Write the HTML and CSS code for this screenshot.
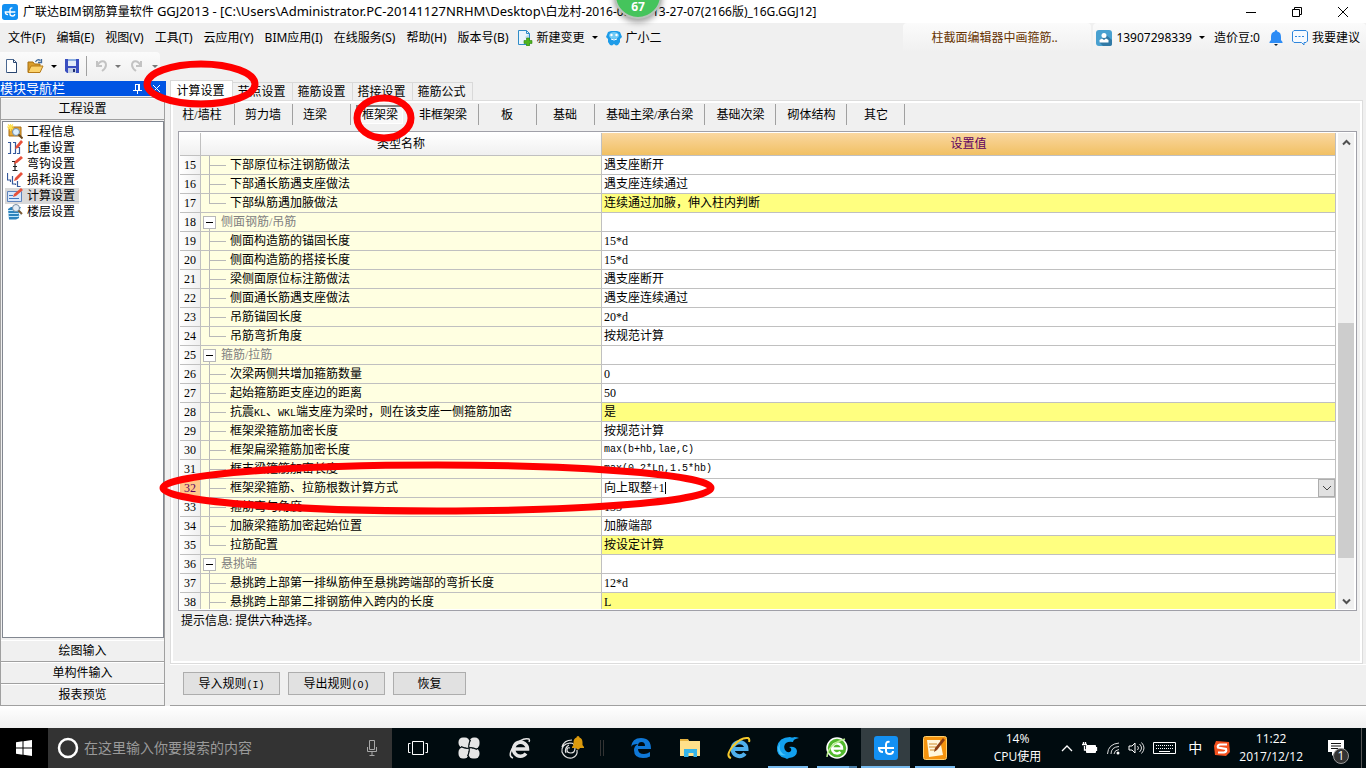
FILE: index.html
```html
<!DOCTYPE html>
<html lang="zh-CN">
<head>
<meta charset="utf-8">
<title>广联达BIM钢筋算量软件 GGJ2013</title>
<link rel="stylesheet" href="styles.css">
</head>
<body>
<header class="titlebar">
  <svg class="i16" viewBox="0 0 24 24"><rect width="24" height="24" rx="4" fill="#1390f2"/><path d="M15.500 6q-3.500-1-3.500 3v6q0 3 4 3 3 0 3-3M4 12h16M5 12q0 4 4 4" fill="none" stroke="#fff" stroke-width="2"/></svg>
  <h1>广联达BIM钢筋算量软件 <span class="path">GGJ2013 - [C:\Users\Administrator.PC-20141127NRHM\Desktop\</span>白龙村-2016-08-09-13-27-07(2166版)_16G.GGJ12]</h1>
  <div class="winbtns">
    <button aria-label="最小化"><svg width="12" height="12"><path d="M1 6.500h10" stroke="#000"/></svg></button>
    <button aria-label="还原"><svg width="12" height="12"><path d="M1.500 3.500h7v7h-7zM3.500 3V1.500h7v7H9" fill="none" stroke="#000"/></svg></button>
    <button aria-label="关闭"><svg width="12" height="12"><path d="M1 1l10 10M11 1L1 11" stroke="#000"/></svg></button>
  </div>
</header>
<div class="badge">67</div>

<nav class="menubar">
  <button>文件(F)</button><button>编辑(E)</button><button>视图(V)</button><button>工具(T)</button><button>云应用(Y)</button><button>BIM应用(I)</button><button>在线服务(S)</button><button>帮助(H)</button><button>版本号(B)</button>
  <button class="withicon two"><svg class="i16" viewBox="0 0 16 16"><path d="M1.500.5h8l3 3v11h-11z" fill="#eaf5fc" stroke="#2f8cc8"/><path d="M9.500.5v3h3" fill="none" stroke="#2f8cc8"/><path d="M8 7l4-3v8z" fill="#bcdff2"/><path d="M9.500 8h3v2.500H15v3h-2.500V16h-3v-2.500H7v-3h2.500z" fill="#4fb51c" stroke="#2d8510" stroke-width=".6"/></svg>新建变更<span class="arrow"></span></button>
  <button class="withicon two"><svg class="i16" viewBox="0 0 16 16"><path d="M2 2l3-1h6l3 1 2 5-2 2v3l-2 3-2 .5L8 14l-2 1.500L4 15l-2-3V9L0 7z" fill="#1d9be8"/><ellipse cx="8" cy="5.500" rx="5" ry="3.500" fill="#72caf5"/><circle cx="5.500" cy="5" r="1.200" fill="#fff"/><circle cx="10.500" cy="5" r="1.200" fill="#fff"/><path d="M5 9q3 2 6 0" fill="none" stroke="#fff"/></svg>广小二</button>
  <div class="account">
    <a class="tip" href="#">柱截面编辑器中画箍筋..</a>
    <div class="user">
      <button class="withicon"><svg class="i16" viewBox="0 0 16 16"><rect width="16" height="16" rx="3" fill="#48a0d0"/><path d="M9 4l7 6v4q0 2-2 2H7l-4-4z" fill="#317aa6"/><circle cx="8" cy="5.500" r="2.500" fill="#fff"/><path d="M3.500 12.500V10L6 8.500 8 10l2-1.500 2.500 1.500v2.500z" fill="#fff"/></svg><span>13907298339</span><span class="arrow"></span></button>
      <span>造价豆:0</span>
      <svg width="14" height="16" viewBox="0 0 14 16"><path d="M7 0a1.500 1.500 0 0 1 1.300 1.500C11 2 12 4 12 7v3l1.500 2v1H.5v-1L2 10V7c0-3 1-5 3.700-5.500A1.500 1.500 0 0 1 7 0z" fill="#2d8cf5"/><path d="M5 14h4l-2 2z" fill="#123"/></svg>
      <button class="withicon"><svg class="i16" viewBox="0 0 16 16"><path d="M2 .5h12L15.500 2v9L14 12.500h-2V15l-2.500-2.500H2L.5 11V2z" fill="#f6faff" stroke="#2f86dc"/><path d="M3 6.500h2m1.500 0h2M10 6.500h2" stroke="#2f86dc"/></svg>我要建议</button>
    </div>
  </div>
</nav>

<div class="toolbar">
  <div class="tools">
    <button aria-label="新建"><svg width="16" height="16"><path d="M2.500 1.500h7l3 3v10h-10z" fill="#fff" stroke="#4b6891"/><path d="M9.500 1.500v3h3M12.500 5v9.500h-9" fill="none" stroke="#29456f"/></svg></button>
    <button aria-label="打开" class="open"><svg width="17" height="16"><path d="M1 4h5l1.500 2H13v8H1z" fill="#d99d2c" stroke="#a66f10"/><path d="M4 8h12l-3 6.500H1z" fill="#fbd26c" stroke="#b67a17"/><path d="M8.500 4q2-3.500 5-1.500M14.500 1v3.500H11" fill="none" stroke="#426b9c" stroke-width="1.300"/></svg><span class="arrow"></span></button>
    <button aria-label="保存" class="save"><svg width="16" height="16"><path d="M1 1h14v14H3l-2-2z" fill="#3a4fc0"/><path d="M4 1h8v7H4z" fill="#e4edf8"/><path d="M4 1h8v2H4z" fill="#8baee0"/><path d="M4 10h8v5H4z" fill="#c6d1e5"/><path d="M9 11h2v3H9z" fill="#1c2b70"/></svg></button>
    <button aria-label="撤销" class="undo" disabled><svg width="16" height="16"><path d="M3 3v5h5M3.500 7.500C6 2 12 2 12 7q0 3-4 6" fill="none" stroke="#c3c3c3" stroke-width="2"/></svg><span class="arrow"></span></button>
    <button aria-label="重做" class="redo" disabled><svg width="16" height="16"><path d="M12 3v5H7M11.500 7.500C9 2 3 2 3 7q0 3 4 6" fill="none" stroke="#c3c3c3" stroke-width="2"/></svg><span class="arrow"></span></button>
  </div>
</div>

<div class="workspace">
  <aside class="side">
    <div class="sidehead"><span>模块导航栏</span><button aria-label="固定"><svg width="9" height="10"><path d="M2.500 0v6M6.500 0v6M2 .5h5M0 6.500h9M4.500 7v3M5.500 0v6" stroke="#fff" fill="none"/></svg></button><button aria-label="关闭"><svg width="9" height="9"><path d="M1 1l7 7M8 1L1 8" stroke="#fff"/></svg></button></div>
    <div class="stack">
      <button class="group">工程设置</button>
      <ul class="navlist">
        <li><a href="#"><svg class="i16" viewBox="0 0 16 16"><path d="M2 3h12v9H2z" fill="#e6a735" stroke="#a86d14"/><path d="M0 3h7M3.500 0v7M1 .5l5 5M6 .5l-5 5" stroke="#ffe14d" stroke-width="1.200"/><circle cx="9" cy="8" r="3.500" fill="#dcefff" stroke="#6d8cad"/><path d="M11.500 10.500l4 4" stroke="#6c4a1c" stroke-width="2"/></svg>工程信息</a></li>
        <li><a href="#"><svg class="i16" viewBox="0 0 16 16"><path d="M1 2.500h2.500v11H1M6 2.500h2.500v11H6M11 7.500h1.500v6H10" fill="none" stroke="#35589b" stroke-width="1.200"/><path d="M8 9l1-3 5-6 2 2-5 6z" fill="#e8503a"/></svg>比重设置</a></li>
        <li><a href="#"><svg class="i16" viewBox="0 0 16 16"><path d="M5 5.500h3v9M5.500 14.500h5M6 10.500h4" fill="none" stroke="#222" stroke-width="1.200"/><path d="M7 8l1-3 6-5 2 2-6 5z" fill="#e8503a"/></svg>弯钩设置</a></li>
        <li><a href="#"><svg class="i16" viewBox="0 0 16 16"><path d="M.5 1v7h3v2M5.500 4v8h3v1M10.500 9v5.500h3" fill="none" stroke="#35589b" stroke-width="1.200"/><path d="M7 9l1-3 6-6 2 2-6 6z" fill="#e8503a"/></svg>损耗设置</a></li>
        <li class="current"><a href="#"><svg class="i16" viewBox="0 0 16 16"><path d="M.5 3.500h14v10H.5z" fill="#d9e8fb" stroke="#5d83bd"/><path d="M2 7.500h4M2 10.500h10" stroke="#4475bd"/><path d="M6 9l1-3 7-6 2 2-7 6z" fill="#e8503a"/></svg>计算设置</a></li>
        <li><a href="#"><svg class="i16" viewBox="0 0 16 16"><path d="M1 5l3-2h10l-2 3v8l-3 1.500H2z" fill="#2e83bd"/><path d="M1 6.500h10l3-2M1 9.500h10l3-2M1 12.500h10l3-2" fill="none" stroke="#c3e7fb"/><circle cx="9" cy="4" r="3.500" fill="#e3edf6" stroke="#758da2"/><path d="M11.500 6.500L15 10" stroke="#7a5a34" stroke-width="2"/></svg>楼层设置</a></li>
      </ul>
      <button class="group">绘图输入</button>
      <button class="group">单构件输入</button>
      <button class="group">报表预览</button>
    </div>
  </aside>

  <main class="content">
    <div class="tabs" role="tablist">
      <button role="tab" class="on">计算设置</button><button role="tab">节点设置</button><button role="tab">箍筋设置</button><button role="tab">搭接设置</button><button role="tab">箍筋公式</button>
    </div>
    <section class="page">
      <div class="subtabs">
        <button class="first">柱/墙柱</button><button>剪力墙</button><button class="near">连梁</button><button class="on"><span>框架梁</span></button><button>非框架梁</button><button>板</button><button>基础</button><button>基础主梁/承台梁</button><button>基础次梁</button><button>砌体结构</button><button>其它</button>
      </div>
      <div class="gridbox">
        <div class="gridview">
          <table class="grid">
            <colgroup><col class="cnum"><col class="cname"><col></colgroup>
            <thead><tr><th></th><th>类型名称</th><th class="hot">设置值</th></tr></thead>
            <tbody>
              <tr><th>15</th><td class="leaf">下部原位标注钢筋做法</td><td>遇支座断开</td></tr>
              <tr><th>16</th><td class="leaf">下部通长筋遇支座做法</td><td>遇支座连续通过</td></tr>
              <tr><th>17</th><td class="leaf last">下部纵筋遇加腋做法</td><td class="changed">连续通过加腋，伸入柱内判断</td></tr>
              <tr><th>18</th><td class="parent"><button aria-label="折叠"></button>侧面钢筋/吊筋</td><td></td></tr>
              <tr><th>19</th><td class="leaf">侧面构造筋的锚固长度</td><td>15*d</td></tr>
              <tr><th>20</th><td class="leaf">侧面构造筋的搭接长度</td><td>15*d</td></tr>
              <tr><th>21</th><td class="leaf">梁侧面原位标注筋做法</td><td>遇支座断开</td></tr>
              <tr><th>22</th><td class="leaf">侧面通长筋遇支座做法</td><td>遇支座连续通过</td></tr>
              <tr><th>23</th><td class="leaf">吊筋锚固长度</td><td>20*d</td></tr>
              <tr><th>24</th><td class="leaf last">吊筋弯折角度</td><td>按规范计算</td></tr>
              <tr><th>25</th><td class="parent"><button aria-label="折叠"></button>箍筋/拉筋</td><td></td></tr>
              <tr><th>26</th><td class="leaf">次梁两侧共增加箍筋数量</td><td>0</td></tr>
              <tr><th>27</th><td class="leaf">起始箍筋距支座边的距离</td><td>50</td></tr>
              <tr><th>28</th><td class="leaf">抗震<span class="code">KL</span>、<span class="code">WKL</span>端支座为梁时，则在该支座一侧箍筋加密</td><td class="changed">是</td></tr>
              <tr><th>29</th><td class="leaf">框架梁箍筋加密长度</td><td>按规范计算</td></tr>
              <tr><th>30</th><td class="leaf">框架扁梁箍筋加密长度</td><td class="code">max(b+hb,lae,C)</td></tr>
              <tr><th>31</th><td class="leaf">框支梁箍筋加密长度</td><td class="code">max(0.2*Ln,1.5*hb)</td></tr>
              <tr><th class="active">32</th><td class="leaf">框架梁箍筋、拉筋根数计算方式</td><td><div class="combo"><input aria-label="框架梁箍筋、拉筋根数计算方式" value="向上取整+1"><i></i><button aria-label="展开"><svg width="10" height="6"><path d="M1 1l4 4 4-4" fill="none" stroke="#444"/></svg></button></div></td></tr>
              <tr><th>33</th><td class="leaf">箍筋弯勾角度</td><td>135</td></tr>
              <tr><th>34</th><td class="leaf">加腋梁箍筋加密起始位置</td><td>加腋端部</td></tr>
              <tr><th>35</th><td class="leaf last">拉筋配置</td><td class="changed">按设定计算</td></tr>
              <tr><th>36</th><td class="parent"><button aria-label="折叠"></button>悬挑端</td><td></td></tr>
              <tr><th>37</th><td class="leaf">悬挑跨上部第一排纵筋伸至悬挑跨端部的弯折长度</td><td>12*d</td></tr>
              <tr><th>38</th><td class="leaf">悬挑跨上部第二排钢筋伸入跨内的长度</td><td class="changed">L</td></tr>
            </tbody>
          </table>
        </div>
        <div class="scroll">
          <button aria-label="向上"><svg width="9" height="7"><path d="M1 5.500l3.500-3.500L8 5.500" fill="none" stroke="#505050" stroke-width="2"/></svg></button>
          <div class="track"><div class="thumb"></div></div>
          <button aria-label="向下"><svg width="9" height="7"><path d="M1 1.500L4.500 5 8 1.500" fill="none" stroke="#505050" stroke-width="2"/></svg></button>
        </div>
      </div>
      <p class="hint">提示信息: 提供六种选择。</p>
    </section>
    <div class="actions">
      <button>导入规则<span class="code">(I)</span></button><button>导出规则<span class="code">(O)</span></button><button class="short">恢复</button>
    </div>
  </main>
</div>

<footer class="taskbar">
  <button class="start" aria-label="开始"><svg width="16" height="16"><path d="M0 2.200L6.500 1.300V7.500H0zM7.500 1.200L16 0v7.500H7.500zM0 8.500h6.500v6.200L0 13.800zM7.500 8.500H16V16l-8.500-1.200z" fill="#fff"/></svg></button>
  <label class="search"><svg width="22" height="22"><circle cx="11" cy="11" r="9" fill="none" stroke="#fff" stroke-width="2.500"/></svg><input placeholder="在这里输入你要搜索的内容"><svg width="12" height="18"><path d="M3.500 1.500h5v9h-5zM1.500 8v4.500h9V8M6 12.500v4M3.500 16.500h5" fill="none" stroke="#a8a8a8"/></svg></label>
  <div class="quick">
    <button aria-label="任务视图"><svg width="22" height="16"><path d="M5.500 1.500h11v13h-11zM3.500 3.500h-2v9h2M18.500 3.500h2v9h-2" fill="none" stroke="#fff"/></svg></button>
    <button aria-label="应用"><svg width="22" height="22"><g fill="#e6e6e6"><rect x=".5" y=".5" width="11" height="10" rx="4.500"/><rect x="11.500" y=".5" width="10" height="11" rx="4.500"/><rect x="10.500" y="11.500" width="11" height="10" rx="4.500"/><rect x=".5" y="10.500" width="10" height="11" rx="4.500"/><rect x="8" y="8" width="6" height="6"/></g><path d="M3 9.500q5 2.500 8 1.500M12.500 3q-2.500 5-1.500 8M19 12.500q-5-2.500-8-1.500M9.500 19q2.500-5 1.500-8" fill="none" stroke="#000b0f" stroke-width="1.200"/></svg></button>
    <button aria-label="浏览器"><svg width="24" height="24"><path d="M6 13h13.500a7 7 0 1 0-1.500 4.500" fill="none" stroke="#e6e6e6" stroke-width="3.500"/><path d="M5 22q-6-2 1-12Q14 1 21 3q1 1 0 3" fill="none" stroke="#e6e6e6" stroke-width="1.500"/></svg></button>
    <button aria-label="消息"><svg width="28" height="26"><path d="M13 13q-3-1-3 2t4 3 4-5-5-5q-9 1-8 9 3 7 10 6 6-2 5-8M5 12q2-7 10-7M12 10q-5 3-3 8" fill="none" stroke="#e6e6e6" stroke-width="1.200"/><path d="M21 1q1.500 0 1.500 1.500 3 1 3 5V10l1.500 2v1H15v-1l1.500-2V7.500q0-4 3-5Q19.500 1 21 1zM19 13h4q-2 3-4 0z" fill="#dc9a0c"/></svg></button>
    <span class="grip"></span>
  </div>
  <div class="apps">
    <button aria-label="Edge"><svg width="22" height="22"><path d="M1 10Q2 1 11 1q10 0 10 11H8q0 5 6 5 3 0 6-2v4.500Q17 21 13 21q-9 0-9-8 0-4 4-6-6 0-7 3zM8 9h7q0-4-3.500-4T8 9z" fill="#0f78d7"/></svg></button>
    <button aria-label="文件资源管理器"><svg width="22" height="20"><path d="M1 1h8l1 2h11v15H1z" fill="#ffe08a"/><path d="M1 1h8v2H1z" fill="#e5b341"/><path d="M5 11h13v8h-3.500v-4h-5v4H5z" fill="#35b4e8"/></svg></button>
    <button aria-label="Internet Explorer"><svg width="24" height="24"><path d="M6 13h13.500a7 7 0 1 0-1.500 4.500" fill="none" stroke="#4fb0ec" stroke-width="4"/><path d="M4 22q-6-2 2-12Q14 1 21 2q2 1 1 4" fill="none" stroke="#f5c92c" stroke-width="2"/></svg></button>
    <button aria-label="浏览器" class="run"><svg width="24" height="24"><path d="M23 2q-6 1-6 4-4-1-7 1-3 3-1 7 3 4 6 1 1-3-2-4 7-1 8 4 0 6-8 7l-2 1-2-1Q0 20 1 11 3 1 14 1q3 1 4 0 3 0 5 1z" fill="#12a0ee"/><path d="M4 7q-2 10 6 12-8 2-8-7z" fill="#48c4fb"/></svg></button>
    <button aria-label="360浏览器" class="run more"><svg width="24" height="24"><circle cx="12" cy="12" r="10" fill="#52b92e" stroke="#fff" stroke-width="1.500"/><path d="M7 12.500h10a5 5 0 1 0-1.500 3.500" fill="none" stroke="#fff" stroke-width="2.500"/><path d="M2 21Q3 8 20 3" fill="none" stroke="#b6ec8d" stroke-width="1.500"/></svg></button>
    <button aria-label="广联达" class="run current"><svg width="24" height="24"><rect width="24" height="24" rx="3" fill="#1390f2"/><path d="M15.500 6q-3.500-1-3.500 3v6q0 3 4 3 3 0 3-3M4 12h16M5 12q0 4 4 4" fill="none" stroke="#fff" stroke-width="2"/></svg></button>
    <button aria-label="画图" class="run"><svg width="24" height="24"><rect x=".5" y=".5" width="23" height="23" rx="2" fill="#f4930e" stroke="#ffcf6d"/><path d="M4 4h13l3 15-14 2z" fill="#fff7dc"/><path d="M6 8h8M6 11h7M7 14h5" stroke="#d08d2d"/><path d="M11 16l1-4 8-10 2 2-8 10z" fill="#8c3e13"/></svg></button>
  </div>
  <div class="tray">
    <div class="cpu">14%<br>CPU使用</div>
    <svg width="12" height="8"><path d="M1 7l5-5 5 5" fill="none" stroke="#fff" stroke-width="1.300"/></svg>
    <svg width="17" height="14"><path d="M5.500 4.500h9v7h-9z" fill="#fff" stroke="#fff"/><path d="M15.500 6v4M1 3.500h5M2.500 1v3M4.500 1v3M3.500 5v4h2" fill="none" stroke="#fff" stroke-width="1.300"/></svg>
    <svg width="14" height="14"><path d="M1.500 13Q2 3 13 2M5 13Q5 6 13 5.500M8 13Q8.500 9 13 8.500" fill="none" stroke="#ddd"/><circle cx="12" cy="12" r="1.500" fill="#fff"/></svg>
    <svg width="17" height="14"><path d="M1 5h3l3-3v10L4 9H1z" fill="none" stroke="#fff"/><path d="M9.500 5q2 2 0 4M11.500 3q4 4 0 8M13.500 1.500q5 5.500 0 11" fill="none" stroke="#ddd"/></svg>
    <svg width="23" height="14"><path d="M.5 1.500h22v11H.5z" fill="none" stroke="#fff"/><path d="M3 4.500h18M3 7.500h18" stroke="#fff" stroke-dasharray="1 1"/><path d="M6 10.500h11" stroke="#fff"/></svg>
    <span class="ime">中</span>
    <svg width="17" height="17"><path d="M2 1l13 1 1 10-4 4-11-1-1-9z" fill="#f4511e"/><path d="M13 4.500H6q-3 .5-2 3l8 1.500q1 3-2 3.500H4" fill="none" stroke="#fff" stroke-width="2.200"/></svg>
    <div class="clock">11:22<br>2017/12/12</div>
    <button class="notice" aria-label="通知"><svg width="17" height="17"><path d="M0 0h16v12H8l-4 4v-4H0z" fill="#fff"/><path d="M3 3.500h10M3 6h10M3 8.500h7" stroke="#111"/></svg><span>1</span></button>
  </div>
</footer>

<svg class="marks" width="1366" height="768" viewBox="0 0 1366 768"><g fill="none" stroke="#f00" stroke-width="7"><ellipse cx="201" cy="84" rx="54" ry="20"/><ellipse cx="384" cy="118" rx="27" ry="20"/><ellipse cx="437" cy="488" rx="274" ry="23"/></g></svg>
</body>
</html>
```
FILE: styles.css
```css
* { box-sizing: border-box; }
body {
  margin: 0;
  height: 100vh;
  display: flex;
  flex-direction: column;
  background: #f0f0f0;
  color: #000;
  font: 12px/16px "Liberation Serif", "Noto Sans CJK SC", sans-serif;
  overflow: hidden;
}
button {
  font: inherit;
  color: inherit;
  background: none;
  border: 0;
  padding: 0;
  white-space: nowrap;
}
input { font: inherit; border: 0; padding: 0; background: none; outline: 0; }
a { color: inherit; text-decoration: none; }
.i16 { width: 16px; height: 16px; flex: none; }
.code { font-family: "Liberation Mono", "Noto Sans CJK SC", monospace; font-size: 10px; }
span.code { line-height: 10px; }
.arrow {
  border: 3px solid transparent;
  border-top-color: #000;
  border-bottom: 0;
  width: 0;
}

.titlebar {
  flex: none;
  display: flex;
  align-items: center;
  height: 23px;
  padding-left: 2px;
  background: #fff;
}
.titlebar h1 {
  flex: 1;
  margin: 0 0 0 5px;
  font: 12px/22px "Noto Sans", "Noto Sans CJK SC", sans-serif;
  white-space: nowrap;
}
.path { font-size: 13px; }
.winbtns { display: flex; align-self: stretch; }
.winbtns button { width: 46px; display: flex; align-items: center; justify-content: center; }
.badge {
  position: absolute;
  top: -29px;
  left: 614px;
  width: 48px;
  height: 48px;
  padding-top: 26px;
  border: 2px solid #b9c3bb;
  border-radius: 50%;
  background: #45c45c;
  box-shadow: 0 3px 6px rgba(0, 0, 0, .4);
  color: #fff;
  font: bold 12px/16px "Open Sans", sans-serif;
  text-align: center;
}

.menubar {
  flex: none;
  display: flex;
  align-items: center;
  gap: 11px;
  height: 29px;
  padding-left: 8px;
  font-family: "Noto Sans", "Noto Sans CJK SC", sans-serif;
}
.withicon { display: flex; align-items: center; gap: 4px; }
.withicon .arrow { margin-left: 3px; }
.two { margin-left: -3px; }
.account { display: flex; align-self: stretch; margin-left: auto; gap: 2px; }
.tip, .user {
  display: flex;
  align-items: center;
  border-radius: 4px 4px 0 0;
  background: linear-gradient(#fbfbfb, #f0f0f0);
}
.tip {
  width: 188px;
  padding-left: 28px;
  color: #663300;
}
.user { gap: 9px; padding: 0 6px 0 3px; }

.toolbar { flex: none; height: 29px; display: flex; align-items: flex-start; }
.tools {
  display: flex;
  align-items: center;
  height: 28px;
  width: 160px;
  padding-left: 4px;
  border-radius: 0 4px 4px 0;
  background: linear-gradient(#fbfbfb, #f0f0f0);
}
.tools button { display: flex; align-items: center; }
.open { margin-left: 7px; gap: 7px; }
.open .arrow { margin-right: 7px; }
.tools .save { border-right: 1px solid #a0a0a0; padding: 2px 6px 2px 0; }
.undo { margin-left: 7px; gap: 5px; }
.redo { margin-left: 8px; gap: 7px; }
.undo .arrow, .redo .arrow { border-top-color: #777; }

.workspace {
  flex: 1;
  min-height: 0;
  display: flex;
  gap: 4px;
  padding-bottom: 22px;
  background: linear-gradient(#fff, #f0f0f0) bottom / 100% 22px no-repeat #f0f0f0;
}
.side { width: 166px; display: flex; flex-direction: column; }
.sidehead {
  display: flex;
  align-items: center;
  gap: 10px;
  height: 15px;
  padding-right: 5px;
  background: #0054e3;
  color: #fff;
  font-size: 13px;
  line-height: 15px;
}
.sidehead span { flex: 1; }
.sidehead button { display: flex; }
.stack {
  flex: 1;
  min-height: 0;
  display: flex;
  flex-direction: column;
  margin: 1px 1px 0 0;
  border: 1px solid #a0a0a0;
  border-width: 1px 1px 0;
}
.group {
  flex: none;
  height: 22px;
  border-top: 1px solid #fff;
  border-bottom: 1px solid #a0a0a0;
}
.navlist {
  flex: 1;
  min-height: 0;
  list-style: none;
  margin: 1px 0 2px 1px;
  padding: 2px;
  border: 1px solid #828790;
  background: #fff;
}
.navlist a { display: inline-flex; gap: 4px; padding: 0 4px 0 2px; }
.navlist li { display: flex; height: 16px; }
.current a { background: #d9d9d9; }

.content { flex: 1; min-width: 0; display: flex; flex-direction: column; }
.tabs { flex: none; display: flex; align-items: flex-end; height: 19px; }
.tabs button {
  width: 60px;
  height: 18px;
  padding-right: 2px;
  border: 1px solid #d9d9d9;
  border-width: 1px 1px 0 0;
}
.tabs .on { width: 63px; height: 20px; background: #fff; border-left-width: 1px; }
.page {
  flex: 1;
  min-height: 0;
  display: flex;
  flex-direction: column;
  margin-right: 3px;
  padding: 0 5px 0 4px;
  border: 1px solid #dcdcdc;
  box-shadow: inset 0 0 0 2px #fff;
}
.subtabs { flex: none; display: flex; margin-top: 3px; height: 21px; }
.subtabs button { min-width: 58px; padding: 0 11px 0 10px; border-right: 1px solid #a0a0a0; }
.subtabs button:nth-child(n+8) { padding: 0 11px; }
.subtabs .first { width: 60px; padding: 0 8px 0 3px; }
.subtabs .near { text-align: left; }
.subtabs .on { padding: 0 5px; }
.subtabs .on span {
  display: block;
  border: 1px solid #fff;
  border-width: 2px 1px 1px 2px;
  border-top-color: #808080;
  border-left-color: #808080;
  background: #f8f8f8;
}
.gridbox {
  flex: 1;
  min-height: 0;
  display: flex;
  margin: 6px 0 0 3px;
  border: 1px solid #a0a0a8;
  padding: 1px;
  background: #fff;
}
.gridview { flex: 1; min-width: 0; overflow: hidden; }
.grid {
  width: 100%;
  table-layout: fixed;
  border-collapse: separate;
  border-spacing: 0;
}
.cnum { width: 21px; }
.cname { width: 401px; }
.grid th, .grid td {
  height: 19px;
  padding: 0 2px;
  border-right: 1px solid #c0c0c0;
  border-bottom: 1px solid #c0c0c0;
  line-height: 18px;
  text-align: left;
  font-weight: normal;
  white-space: nowrap;
}
.grid th { padding: 0; text-align: center; background: linear-gradient(90deg, #fff, #f0f0f0); }
.grid thead th { height: 23px; background: linear-gradient(#fff, #f0f0f0); }
.grid thead .hot { background: linear-gradient(#fad7a0, #f1c063); color: #600060; }
.grid .active { background: #ffc88a; color: #600060; }
.grid .changed { background: #ffff80; }
.grid .leaf {
  padding-left: 29px;
  background: linear-gradient(#b8b8b8, #b8b8b8) 8px 0 / 1px 100% no-repeat, linear-gradient(#b8b8b8, #b8b8b8) 8px 9px / 17px 1px no-repeat, #ffffe1;
}
.grid .last {
  background: linear-gradient(#b8b8b8, #b8b8b8) 8px 0 / 1px 10px no-repeat, linear-gradient(#b8b8b8, #b8b8b8) 8px 9px / 17px 1px no-repeat, #ffffe1;
}
.grid .parent {
  color: #808080;
  background: linear-gradient(#b8b8b8, #b8b8b8) 8px 100% / 1px 4px no-repeat, #ffffe1;
}
.parent button {
  width: 13px;
  height: 13px;
  margin-right: 5px;
  border: 1px solid #b8b8b8;
  background: linear-gradient(#000, #000) center / 7px 1px no-repeat, #fff;
  vertical-align: -2px;
}
.combo { display: flex; align-items: center; height: 18px; margin-right: -2px; }
.combo input { width: 61px; }
.combo i { width: 1px; height: 12px; background: #000; }
.combo button {
  display: flex;
  align-items: center;
  justify-content: center;
  width: 17px;
  height: 18px;
  margin-left: auto;
  border: 1px solid #adadad;
  background: #e1e1e1;
}
.scroll {
  display: flex;
  flex-direction: column;
  width: 16px;
  margin: 0 1px 0 2px;
  background: #f0f0f0;
}
.scroll button { height: 17px; }
.track { flex: 1; display: flex; flex-direction: column; }
.track::before { content: ""; flex: 173; }
.track::after { content: ""; flex: 34; }
.thumb { flex: 235; background: #cdcdcd; }
.hint { flex: none; margin: 0; height: 52px; padding: 2px 6px; }
.actions {
  flex: none;
  display: flex;
  gap: 8px;
  height: 42px;
  padding: 7px 13px;
  border-top: 1px solid #fff;
  border-bottom: 1px solid #a0a0a0;
}
.actions button {
  width: 97px;
  height: 23px;
  border: 1px solid #adadad;
  background: #e1e1e1;
}
.actions .short { width: 73px; }

.taskbar {
  flex: none;
  display: flex;
  height: 40px;
  background: #000b0f;
  color: #fff;
  font-family: "Open Sans", "Noto Sans CJK SC", sans-serif;
}
.taskbar button { display: flex; align-items: center; justify-content: center; }
.start { width: 48px; background: #000; }
.search {
  display: flex;
  align-items: center;
  gap: 5px;
  width: 344px;
  padding: 0 14px 0 9px;
  background: #333;
}
.search input { flex: 1; min-width: 0; color: #fff; font-size: 14px; line-height: 20px; }
.search input::placeholder { color: #9a9a9a; opacity: 1; }
.quick { display: flex; align-items: center; }
.quick button { width: 51px; height: 40px; }
.grip { width: 4px; height: 16px; margin-left: 4px; border: 1px solid #333; border-width: 0 1px; }
.apps { display: flex; margin-left: 12px; }
.apps button { width: 49px; }
.apps .run { background: linear-gradient(#76b9ed, #76b9ed) bottom / 40px 2px no-repeat; }
.apps .more { background: linear-gradient(90deg, #76b9ed 32px, #4a7da6 32px) bottom / 40px 2px no-repeat; }
.apps .current { background-color: #333d41; background-size: 49px 2px; }
.tray { display: flex; align-items: center; margin-left: auto; gap: 8px; }
.cpu, .clock { text-align: center; line-height: 18px; }
.cpu { margin-right: 12px; }
.ime { font-size: 14px; margin: 0 4px; }
.tray .notice { position: relative; width: 51px; height: 40px; border-right: 1px solid #555; margin-right: 4px; }
.notice span {
  position: absolute;
  right: 12px;
  bottom: 4px;
  width: 16px;
  height: 16px;
  border: 1px solid #999;
  border-radius: 50%;
  background: #333;
  line-height: 14px;
}

.marks { position: absolute; top: 0; left: 0; pointer-events: none; }
```
